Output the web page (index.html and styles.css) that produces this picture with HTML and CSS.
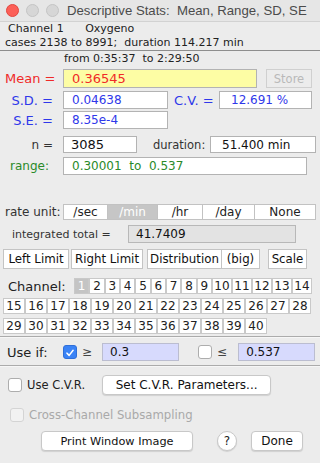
FILE: index.html
```html
<!DOCTYPE html>
<html lang="en">
<head>
  <meta charset="UTF-8" />
  <meta name="viewport" content="width=device-width, initial-scale=1.0"/>
  <title>Descriptive Stats</title>
  <link rel="stylesheet" href="styles.css">
</head>
<body>
  <div class="window">

    <header class="titlebar">
      <div class="lights">
        <span class="light red"></span>
        <span class="light"></span>
        <span class="light"></span>
      </div>
      <div class="title">Descriptive Stats:&nbsp; Mean, Range, SD, SE</div>
    </header>

    <div class="info">
      <div class="info-line chan">Channel 1 <span class="chan-name">Oxygeno</span></div>
      <div class="info-line">cases 2138 to 8991;&nbsp; duration 114.217 min</div>
    </div>

    <div class="from">from 0:35:37&nbsp; to 2:29:50</div>

    <div class="row row-mean">
      <span class="lbl red-text">Mean =</span>
      <div class="field field-mean">0.36545</div>
      <button class="store" disabled>Store</button>
    </div>

    <div class="row row-sd">
      <span class="lbl blue-text">S.D. =</span>
      <div class="field field-sd blue-text">0.04638</div>
      <span class="cv-lbl blue-text">C.V. =</span>
      <div class="field field-cv blue-text">12.691 %</div>
    </div>

    <div class="row row-se">
      <span class="lbl blue-text">S.E. =</span>
      <div class="field field-sd blue-text">8.35e-4</div>
    </div>

    <div class="row row-n">
      <span class="lbl small">n =</span>
      <div class="field field-n">3085</div>
      <span class="dur-lbl">duration:</span>
      <div class="field field-dur">51.400 min</div>
    </div>

    <div class="row row-range">
      <span class="lbl small green-text range-lbl">range:</span>
      <div class="field field-range green-text">0.30001&nbsp; to&nbsp; 0.537</div>
    </div>

    <div class="row row-rate">
      <span class="rate-lbl">rate unit:</span>
      <div class="segments">
        <button class="seg seg-sec">/sec</button>
        <button class="seg seg-min active">/min</button>
        <button class="seg seg-hr">/hr</button>
        <button class="seg seg-day">/day</button>
        <button class="seg seg-none">None</button>
      </div>
    </div>

    <div class="row row-total">
      <span class="total-lbl">integrated total =</span>
      <div class="field field-total">41.7409</div>
    </div>

    <div class="row row-limits">
      <button class="sq-btn btn-left">Left Limit</button>
      <button class="sq-btn btn-right">Right Limit</button>
      <button class="sq-btn btn-dist">Distribution</button>
      <button class="sq-btn btn-big">(big)</button>
      <button class="sq-btn btn-scale">Scale</button>
    </div>

    <div class="channels">
      <div class="ch-row">
        <span class="ch-lbl">Channel:</span>
        <div class="ch-cell one active">1</div>
        <div class="ch-cell one">2</div>
        <div class="ch-cell one">3</div>
        <div class="ch-cell one">4</div>
        <div class="ch-cell one">5</div>
        <div class="ch-cell one">6</div>
        <div class="ch-cell one">7</div>
        <div class="ch-cell one">8</div>
        <div class="ch-cell one">9</div>
        <div class="ch-cell two">10</div>
        <div class="ch-cell two">11</div>
        <div class="ch-cell two">12</div>
        <div class="ch-cell two">13</div>
        <div class="ch-cell two">14</div>
      </div>
      <div class="ch-row">
        <div class="ch-cell">15</div>
        <div class="ch-cell">16</div>
        <div class="ch-cell">17</div>
        <div class="ch-cell">18</div>
        <div class="ch-cell">19</div>
        <div class="ch-cell">20</div>
        <div class="ch-cell">21</div>
        <div class="ch-cell">22</div>
        <div class="ch-cell">23</div>
        <div class="ch-cell">24</div>
        <div class="ch-cell">25</div>
        <div class="ch-cell">26</div>
        <div class="ch-cell">27</div>
        <div class="ch-cell">28</div>
      </div>
      <div class="ch-row">
        <div class="ch-cell">29</div>
        <div class="ch-cell">30</div>
        <div class="ch-cell">31</div>
        <div class="ch-cell">32</div>
        <div class="ch-cell">33</div>
        <div class="ch-cell">34</div>
        <div class="ch-cell">35</div>
        <div class="ch-cell">36</div>
        <div class="ch-cell">37</div>
        <div class="ch-cell">38</div>
        <div class="ch-cell">39</div>
        <div class="ch-cell">40</div>
      </div>
    </div>

    <div class="sep"></div>

    <div class="row row-useif">
      <span class="useif-lbl">Use if:</span>
      <span class="check checked">
        <svg width="14" height="14" viewBox="0 0 14 14"><path d="M3.5 7.2 L6 9.8 L10.6 3.8" fill="none" stroke="#fff" stroke-width="1.8" stroke-linecap="round" stroke-linejoin="round"/></svg>
      </span>
      <span class="rel">&ge;</span>
      <div class="field field-lim lim-lo">0.3</div>
      <span class="check cb-hi"></span>
      <span class="rel">&le;</span>
      <div class="field field-lim lim-hi">0.537</div>
    </div>

    <div class="sep sep-2"></div>

    <div class="row row-cvr">
      <span class="check cb-cvr"></span>
      <span class="cvr-lbl">Use C.V.R.</span>
      <button class="mac-btn btn-cvr">Set C.V.R. Parameters...</button>
    </div>

    <div class="row row-cross">
      <span class="check disabled"></span>
      <span class="cross-lbl">Cross-Channel Subsampling</span>
    </div>

    <div class="row row-bottom">
      <button class="mac-btn btn-print">Print Window Image</button>
      <button class="help">?</button>
      <button class="mac-btn btn-done">Done</button>
    </div>

  </div>
</body>
</html>
```

FILE: styles.css
```css
body {
  margin: 0;
  font-family: "DejaVu Sans", sans-serif;
  background-color: #ececec;
  color: #222;
}

button {
  font-family: "DejaVu Sans", sans-serif;
  padding: 0;
  margin: 0;
}

.window {
  width: 320px;
  height: 463px;
  overflow: hidden;
}

/* title bar */
.titlebar {
  height: 21px;
  display: flex;
  align-items: center;
  background-color: #e6e6e6;
  border-bottom: 1px solid #d2d2d2;
}

.lights {
  display: flex;
  gap: 7px;
  margin-left: 6px;
}

.light {
  box-sizing: border-box;
  width: 13px;
  height: 13px;
  border-radius: 50%;
  background-color: #d6d6d6;
  border: 1px solid #c4c4c4;
}

.light.red {
  background-color: #fc5f57;
  border-color: #e2463f;
}

.title {
  margin-left: 8px;
  font-family: "Liberation Sans", Arial, sans-serif;
  font-size: 13.2px;
  color: #4b4b4b;
  white-space: nowrap;
}

/* header info */
.info {
  padding-left: 5px;
  font-size: 11px;
  border-bottom: 1px solid #8e8e8e;
}

.info-line {
  height: 14px;
  line-height: 14px;
}

.info-line.chan {
  padding-left: 3px;
}

.chan-name {
  margin-left: 18px;
}

.from {
  margin-left: 64px;
  font-size: 11px;
  line-height: 14px;
  margin-top: 1px;
}

/* value rows */
.row {
  display: flex;
  align-items: center;
  margin-left: 5px;
}

.lbl {
  width: 48px;
  margin-right: 10px;
  text-align: right;
  font-size: 13px;
  white-space: nowrap;
}

.lbl.small {
  font-size: 12px;
  color: #333;
}

.range-lbl {
  padding-right: 4px;
  width: 44px;
}

.red-text { color: #f02a28; }
.blue-text { color: #2f38ea; }
.green-text { color: #2a8a2a !important; }

.field {
  box-sizing: border-box;
  background-color: #fff;
  border: 1px solid #b3b3b3;
  display: flex;
  align-items: center;
  padding-left: 7px;
  font-size: 12px;
  white-space: nowrap;
}

.row-mean {
  margin-top: 3px;
}

.field-mean {
  width: 194px;
  height: 19px;
  background-color: #fdfda4;
  color: #f02a28;
  font-size: 13px;
  padding-left: 8px;
}

.store {
  margin-left: 9px;
  width: 46px;
  height: 19px;
  background-color: #ececec;
  border: 1px solid #d0d0d0;
  color: #b9b9b9;
  font-size: 11.5px;
}

.row-sd {
  margin-top: 3px;
}

.row-se {
  margin-top: 2px;
}

.field-sd {
  width: 105px;
  height: 18px;
  padding-left: 8px;
}

.cv-lbl {
  font-size: 13px;
  margin-left: 6px;
  width: 40px;
  margin-right: 5px;
  white-space: nowrap;
}

.field-cv {
  width: 93px;
  height: 18px;
  padding-left: 11px;
}

.row-n {
  margin-top: 7px;
}

.field-n {
  width: 74px;
  height: 17px;
  font-size: 13px;
  color: #111;
}

.dur-lbl {
  margin-left: 16px;
  width: 57px;
  font-size: 11.5px;
  color: #333;
}

.field-dur {
  width: 106px;
  height: 17px;
  padding-left: 11px;
  color: #111;
}

.row-range {
  margin-top: 4px;
}

.field-range {
  width: 244px;
  height: 18px;
  padding-left: 8px;
}

/* rate unit */
.row-rate {
  margin-top: 29px;
}

.rate-lbl {
  width: 58px;
  font-size: 12px;
  color: #333;
}

.segments {
  display: flex;
}

.seg {
  box-sizing: border-box;
  height: 16px;
  background-color: #fff;
  border: 1px solid #c2c2c2;
  border-left: none;
  font-size: 12px;
  color: #222;
}

.seg-sec { width: 45px; border-left: 1px solid #c2c2c2; }
.seg-min { width: 50px; }
.seg-hr { width: 45px; }
.seg-day { width: 52px; }
.seg-none { width: 61px; }

.seg.active {
  background-color: #c6c6c6;
  color: #fff;
}

.row-total {
  margin-top: 5px;
  margin-left: 12px;
}

.total-lbl {
  width: 116px;
  font-size: 11px;
  color: #333;
}

.field-total {
  width: 168px;
  height: 18px;
  background-color: #e3e3e3;
  border-color: #b8b8b8;
  color: #111;
}

/* limit buttons */
.row-limits {
  margin-top: 6px;
  margin-left: 3px;
}

.sq-btn {
  box-sizing: border-box;
  height: 20px;
  background-color: #fff;
  border: 1px solid #c4c4c4;
  font-size: 11.8px;
  color: #111;
}

.btn-left { width: 66px; }
.btn-right { width: 72px; margin-left: 2px; }
.btn-dist { width: 75px; margin-left: 4px; }
.btn-big { width: 38px; border-left: none; }
.btn-scale { width: 39px; margin-left: 8px; }

/* channel grid */
.channels {
  margin-top: 9px;
  margin-left: 3px;
}

.ch-row {
  display: flex;
  align-items: center;
  height: 16px;
  margin-bottom: 4px;
}

.ch-lbl {
  width: 71px;
  padding-left: 5px;
  box-sizing: border-box;
  font-size: 13px;
  color: #222;
}

.ch-cell {
  box-sizing: border-box;
  width: 22px;
  height: 16px;
  background-color: #fff;
  border: 1px solid #c9c9c9;
  font-size: 12px;
  line-height: 14px;
  text-align: center;
  color: #222;
}

.ch-cell.one { width: 15.33px; }
.ch-cell.two { width: 20px; }

.ch-cell.active {
  background-color: #c4c4c4;
  color: #fff;
}

.sep {
  margin-top: -2px;
  height: 1px;
  border-top: 1px solid #ababab;
  background-color: #f6f6f6;
}

/* use if */
.row-useif {
  margin-top: 5px;
  margin-left: 7px;
}

.useif-lbl {
  width: 56px;
  font-size: 13px;
}

.check {
  box-sizing: border-box;
  width: 14px;
  height: 14px;
  border-radius: 3px;
  background-color: #fff;
  border: 1px solid #adadad;
  display: flex;
}

.check.checked {
  background-color: #3a83f6;
  border-color: #2f6fd8;
}

.rel {
  font-size: 12px;
  margin-left: 5px;
  color: #444;
}

.field-lim {
  width: 77px;
  height: 18px;
  background-color: #d7dafd;
  border-color: #bbbdd0;
  color: #111;
  padding-left: 7px;
}

.lim-lo { margin-left: 10px; }

.cb-hi { margin-left: 19px; }

.lim-hi { margin-left: 11px; }

.sep-2 {
  margin-top: 4px;
}

/* cvr / bottom */
.row-cvr {
  margin-top: 8px;
  margin-left: 8px;
}

.cvr-lbl {
  margin-left: 5px;
  font-size: 11.5px;
}

.mac-btn {
  box-sizing: border-box;
  height: 20px;
  background-color: #fff;
  border: 1px solid #c8c8c8;
  border-radius: 4px;
  box-shadow: 0 1px 1px rgba(0,0,0,0.12);
  font-size: 12px;
  color: #111;
}

.btn-cvr {
  width: 169px;
  margin-left: 17px;
}

.row-cross {
  margin-top: 13px;
  margin-left: 10px;
}

.check.disabled {
  border-color: #d4d4d4;
  background-color: #f2f2f2;
}

.cross-lbl {
  margin-left: 5px;
  font-size: 11.7px;
  color: #a9a9a9;
}

.row-bottom {
  margin-top: 9px;
  margin-left: 41px;
}

.btn-print { width: 152px; font-size: 11.3px; }

.help {
  margin-left: 24px;
  width: 20px;
  height: 20px;
  border-radius: 50%;
  background-color: #fff;
  border: 1px solid #c8c8c8;
  box-shadow: 0 1px 1px rgba(0,0,0,0.12);
  font-size: 12px;
  color: #222;
}

.btn-done {
  width: 52px;
  margin-left: 14px;
}
```
